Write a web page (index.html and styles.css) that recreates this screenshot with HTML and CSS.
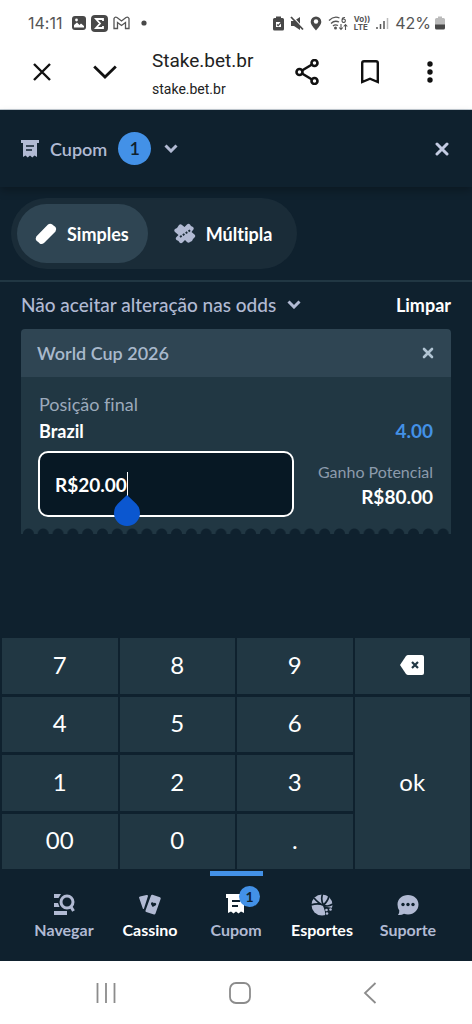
FILE: index.html
```html
<!DOCTYPE html>
<html lang="pt-BR">
<head>
<meta charset="utf-8">
<meta name="viewport" content="width=device-width, initial-scale=1">
<title>Stake.bet.br</title>
<link rel="stylesheet" href="styles.css">
</head>
<body>
<div class="status">
  <div class="status-group">
    <span class="clock">14:11</span>
    <svg width="14" height="14" viewBox="0 0 14 14"><rect width="14" height="14" rx="3" fill="#484848"/><path d="M2 11.500V9l3-2.500L7.500 9l1.500-1.500 3 2.500v1.500z" fill="#fff"/><circle cx="4.500" cy="4" r="1.400" fill="#fff"/></svg>
    <svg width="17" height="17" viewBox="0 0 17 17"><rect width="17" height="17" rx="4" fill="#484848"/><path d="M12 6V4H5l4 4.500L5 13h7v-2" fill="none" stroke="#fff" stroke-width="1.800"/></svg>
    <svg width="17" height="14" viewBox="0 0 17 14"><path d="M1 12.500V2.500Q2 .5 4 1.500L8.500 5 13 1.500Q15 .5 16 2.500V12.500H12.500V6.500L8.500 9.500 4.500 6.500V12.500Z" fill="none" stroke="#555" stroke-width="1.300"/></svg>
    <svg class="dot" width="6" height="6" viewBox="0 0 6 6"><circle cx="3" cy="3" r="2.600" fill="#484848"/></svg>
  </div>
  <div class="status-group status-right">
    <svg width="11" height="15" viewBox="0 0 11 15"><path d="M3 2V.5h5V2h1.500Q11 2 11 3.500v9.500q0 1.500-1.500 1.500h-8Q0 14.500 0 13V3.500Q0 2 1.500 2z" fill="#484848"/><path d="M3 6h5v5H3z" fill="#fff"/><path d="M4 8.500l1.200 1.200L8.500 6" fill="none" stroke="#484848" stroke-width="1.200"/></svg>
    <svg width="14" height="15" viewBox="0 0 14 15"><path d="M1 5h3l6-4v13L4 10H1z" fill="#484848"/><path d="M2 0l12 13" stroke="#fff" stroke-width="1.200"/><path d="M1 1l12 12.500" stroke="#484848" stroke-width="1.800"/></svg>
    <svg width="12" height="15" viewBox="0 0 12 15"><path d="M6 .5a5.300 5.300 0 0 1 5.300 5.300C11.300 9 8 12 6 14.500 4 12 .7 9 .7 5.800A5.300 5.300 0 0 1 6 .5z" fill="#484848"/><circle cx="6" cy="5.500" r="2.200" fill="#fff"/></svg>
    <svg width="20" height="15" viewBox="0 0 20 15"><g fill="none" stroke="#555" stroke-width="1.300"><path d="M1 4.500Q6-.5 11.500 2M3 7.500q3.500-3.500 8-1.500M5 10q2-2 5-.5"/><path d="M17 1.500q-3-.5-3 3a1.700 1.700 0 1 0 .2-.6" stroke-width="1.100"/><path d="M13 8v5.500M11.200 11.500l1.800 2 1.800-2M17.500 14V8.500M15.700 10.500l1.800-2 1.800 2" stroke-width="1.100"/></g><circle cx="7.500" cy="12" r="1.500" fill="#555"/></svg>
    <span class="volte"><span>Vo))</span><span>LTE</span></span>
    <svg width="13" height="13" viewBox="0 0 13 13"><path d="M1 10v2M4.500 7v5M8 4v8" stroke="#555" stroke-width="1.500"/><path d="M11.500 1v11" stroke="#bbb" stroke-width="1.500"/></svg>
    <span class="battery">42%</span>
    <svg width="10" height="14" viewBox="0 0 10 14"><path d="M3 2V.5h4V2h1.500Q10 2 10 3.500V9H0V3.500Q0 2 1.500 2z" fill="#bbb"/><path d="M0 8.500h10V12q0 1.500-1.500 1.500h-7Q0 13.500 0 12z" fill="#484848"/></svg>
  </div>
</div>

<header class="browser">
  <button class="plain" aria-label="Fechar aba"><svg width="18" height="18" viewBox="0 0 18 18"><path d="M1 1l16 16M17 1L1 17" stroke="#111" stroke-width="2.400"/></svg></button>
  <button class="plain" aria-label="Minimizar"><svg width="24" height="14" viewBox="0 0 24 14"><path d="M1.200 1.500L12 12 22.800 1.500" fill="none" stroke="#111" stroke-width="2.800"/></svg></button>
  <div class="site"><span class="site-title">Stake.bet.br</span><span class="site-url">stake.bet.br</span></div>
  <div class="browser-actions">
    <button class="plain" aria-label="Compartilhar"><svg width="24" height="26" viewBox="0 0 24 26"><g fill="none" stroke="#111" stroke-width="2.600"><path d="M7 11.500l10-6M7 14.500l10 6"/><circle cx="4.500" cy="13" r="3"/><circle cx="19.500" cy="4" r="3"/><circle cx="19.500" cy="22" r="3"/></g></svg></button>
    <button class="plain" aria-label="Favoritar"><svg width="18" height="24" viewBox="0 0 18 24"><path d="M1.200 3Q1.200 1.200 3 1.200h12Q16.800 1.200 16.800 3v19L9 18.700 1.200 22z" fill="none" stroke="#111" stroke-width="2.400"/></svg></button>
    <button class="plain" aria-label="Mais opções"><svg width="6" height="22" viewBox="0 0 6 22"><g fill="#111"><circle cx="3" cy="3" r="2.700"/><circle cx="3" cy="11" r="2.700"/><circle cx="3" cy="19" r="2.700"/></g></svg></button>
  </div>
</header>

<main class="slip">
  <div class="slip-head">
    <button class="plain slip-toggle">
      <svg width="18" height="18" viewBox="0 0 18 18"><path d="M0 0h18v3h-2v14l-2.500-1.500-2.200 2-2.300-2-2.300 2-2.200-2L2 17V3H0z" fill="#b1bad3"/><path d="M5 6h8M5 10h6" stroke="#0f212e" stroke-width="1.700"/></svg>
      <span>Cupom</span><span class="count">1</span>
      <svg width="14" height="9" viewBox="0 0 14 9"><path d="M1.500 1.500L7 7l5.500-5.500" fill="none" stroke="#b1bad3" stroke-width="3"/></svg>
    </button>
    <button class="plain" aria-label="Fechar cupom"><svg width="14" height="14" viewBox="0 0 14 14"><path d="M2 2l10 10M12 2L2 12" stroke="#c3cbe2" stroke-width="3" stroke-linecap="round"/></svg></button>
  </div>

  <div class="modes">
    <div class="pill" role="tablist">
      <button class="tab active" role="tab" aria-selected="true"><svg width="22" height="22" viewBox="0 0 22 22"><path d="M13 1.500Q15 0 17 1.300L18.500 2.500 20.500 4Q22 6 20.500 8.500L9 20Q7 21.500 5 20.700L3.500 19.200 1.500 17.700Q0 16 1.300 13.500Z" fill="#fff"/></svg>Simples</button>
      <button class="tab" role="tab" aria-selected="false"><svg width="22" height="22" viewBox="0 0 22 22"><path d="M5 2q1.500-1.500 3 0l2.500 2L13 1.500q1.500-1.500 3 0l1 1.500 2 1q1.500 1.500 0 3L17.500 9l3 2.500q1.500 1.500 0 3L19 16l-1 2-2 1q-1.500 1.500-3 0l-2-2-2.500 2.500q-1.500 1.500-3 0L4.500 18l-2-1q-1.500-1.500 0-3l2-2L1 9q-1.500-1.500 0-3l2-1z" fill="#b1bad3"/><path d="M6 14L16.500 7" stroke="#1a2c38" stroke-width="1.900" stroke-dasharray="2 1.400"/></svg>Múltipla</button>
    </div>
  </div>

  <div class="options">
    <button class="plain odds">Não aceitar alteração nas odds<svg width="14" height="9" viewBox="0 0 14 9"><path d="M1.500 1.500L7 7l5.500-5.500" fill="none" stroke="#b1bad3" stroke-width="3"/></svg></button>
    <button class="plain clear">Limpar</button>
  </div>

  <section class="ticket">
    <div class="ticket-head"><span>World Cup 2026</span><button class="plain" aria-label="Remover"><svg width="12" height="12" viewBox="0 0 12 12"><path d="M2 2l8 8M10 2L2 10" stroke="#b1c4d3" stroke-width="2.600" stroke-linecap="round"/></svg></button></div>
    <div class="ticket-body">
      <label class="market" for="stake">Posição final</label>
      <div class="pick"><span>Brazil</span><span class="price">4.00</span></div>
      <div class="wager">
        <div class="field"><input id="stake" type="text" inputmode="decimal" value="R$20.00"><span class="caret"></span><svg class="handle" width="26" height="31" viewBox="0 0 26 31"><path d="M13 0L22.200 8.800A13 13 0 1 1 3.800 8.800Z" fill="#0b57d0"/></svg></div>
        <div class="payout"><span class="payout-label">Ganho Potencial</span><span class="payout-value">R$80.00</span></div>
      </div>
    </div>
    <div class="tear"></div>
  </section>
</main>

<div class="keypad">
  <button>7</button><button>8</button><button>9</button>
  <button aria-label="Apagar"><svg width="24" height="20" viewBox="0 0 24 20"><path d="M8 0h14q2 0 2 2v16q0 2-2 2H8q-1 0-2-1L0 10 6 1Q7 0 8 0z" fill="#fff"/><path d="M12 7l6 6M18 7l-6 6" stroke="#213743" stroke-width="2.200"/></svg></button>
  <button>4</button><button>5</button><button>6</button><button class="ok">ok</button>
  <button>1</button><button>2</button><button>3</button>
  <button>00</button><button>0</button><button>.</button>
</div>

<nav class="tabs">
  <a href="#navegar"><svg width="22" height="22" viewBox="0 0 22 22"><path d="M1 0h7L5.500 4H1zM1 9h4l1.500 4H1zM1 17h13v4H1z" fill="#b1bad3"/><circle cx="14" cy="8" r="6" fill="none" stroke="#b1bad3" stroke-width="3"/><path d="M17.500 12l3 5" stroke="#b1bad3" stroke-width="3"/></svg><span>Navegar</span></a>
  <a href="#cassino" class="bright"><svg width="22" height="22" viewBox="0 0 22 22"><path d="M0 3.500Q0 3 1 2.500l6.500-1.400q1.500-.3 1.500.9L5 14.500q-.7 1-1.200 0zM12 1.500q.5-1 1.500-.7l7.500 2.400q1 .5.700 1.600L16.500 19.500q-.5 1.200-1.500.9L7.200 18q-1-.5-.7-1.500z" fill="#b1bad3"/><path d="M13.700 13l-1.700-2.800q-.5-2 1.300-2 1 .1 1.500 1 .7-.6 1.700-.2 1.500 1 .3 2.300z" fill="#0f212e"/></svg><span>Cassino</span></a>
  <a href="#cupom" class="current"><span class="badged"><svg width="22" height="20" viewBox="0 0 22 20"><path d="M1 0h20v4h-2v15l-3-1.500-2.500 2-2.500-2-2.500 2L6 17.500 3 19V4H1z" fill="#fff"/><path d="M7 7h8M7 12h6" stroke="#0f212e" stroke-width="2"/></svg><span class="badge">1</span></span><span>Cupom</span></a>
  <a href="#esportes" class="bright"><svg width="22" height="22" viewBox="0 0 22 22"><circle cx="11" cy="11" r="10.500" fill="#b1bad3"/><path d="M11.500 0Q9.500 6 12.500 11T15 22M3 4q5 6 10 7.500T22 10M0 11q7-2.500 12.500.2M12.500 11Q17 7 18 2" fill="none" stroke="#0f212e" stroke-width="1.700"/><path d="M13 12.500l9 1.500v8h-7z" fill="#0f212e"/><g fill="#b1bad3"><circle cx="15.500" cy="16" r="1.300"/><circle cx="19.500" cy="15.500" r="1.300"/><circle cx="16" cy="19.500" r="1.300"/></g></svg><span>Esportes</span></a>
  <a href="#suporte"><svg width="22" height="22" viewBox="0 0 22 22"><path d="M11 1c6 0 10.500 4 10.500 9.500S17 20.500 11 20.500q-2 0-4-.7Q4.500 21.500 1 21q1.500-2 1.300-4.500Q.5 14 .5 10.500C.5 5 5 1 11 1z" fill="#b1bad3"/><g fill="#0f212e"><circle cx="6" cy="10.500" r="1.700"/><circle cx="11" cy="10.500" r="1.700"/><circle cx="16" cy="10.500" r="1.700"/></g></svg><span>Suporte</span></a>
</nav>

<div class="system">
  <button class="plain" aria-label="Recentes"><svg width="20" height="20" viewBox="0 0 20 20"><path d="M1.500 0v20M10 0v20M18.500 0v20" stroke="#8c8c8c" stroke-width="1.800"/></svg></button>
  <button class="plain" aria-label="Início"><svg width="22" height="22" viewBox="0 0 22 22"><rect x="1" y="1" width="20" height="20" rx="6" fill="none" stroke="#8c8c8c" stroke-width="1.800"/></svg></button>
  <button class="plain" aria-label="Voltar"><svg width="14" height="22" viewBox="0 0 14 22"><path d="M12.500 1L2 11l10.500 10" fill="none" stroke="#8c8c8c" stroke-width="1.800"/></svg></button>
</div>
</body>
</html>
```

FILE: styles.css
```css
* { box-sizing: border-box; }
body {
  margin: 0;
  min-height: 100vh;
  display: flex;
  flex-direction: column;
  background: #0f212e;
  color: #fff;
  font-family: Lato, "Noto Sans", sans-serif;
  font-size: 18px;
  line-height: 24px;
  font-variant-ligatures: none;
}
svg { display: block; flex: none; }
button { font: inherit; font-variant-ligatures: inherit; color: inherit; cursor: pointer; }
.plain { border: 0; background: none; padding: 0; display: flex; align-items: center; }

.status {
  display: flex;
  justify-content: space-between;
  align-items: center;
  height: 46px;
  padding: 0 27px 0 28px;
  background: #fff;
  color: #555;
  font-family: Inter, Roboto, sans-serif;
  font-size: 16px;
}
.status-group { display: flex; align-items: center; gap: 5px; }
.clock { padding-right: 5px; }
.dot { margin-left: 6px; }
.status-right { gap: 6px; }
.volte { display: flex; flex-direction: column; font-size: 8px; line-height: 8px; font-weight: 700; }
.battery { margin-right: -2px; }

.browser {
  display: flex;
  align-items: center;
  height: 64px;
  padding: 0 39px 12px 33px;
  background: #fff;
  border-bottom: 1px solid #c3ccd3;
  color: #222;
  font-family: Roboto, sans-serif;
}
.browser > .plain + .plain { margin-left: 42px; }
.site { display: flex; flex-direction: column; margin-left: 35px; padding-top: 4px; }
.site-title { font-size: 19px; line-height: 30px; }
.site-url { font-size: 14px; line-height: 26px; }
.browser-actions { display: flex; align-items: center; gap: 42px; margin-left: auto; }
.browser-actions .plain:last-child { margin-left: 6px; }

.slip { flex: 1; padding-bottom: 24px; }
.slip-head {
  position: relative;
  display: flex;
  justify-content: space-between;
  align-items: center;
  height: 77px;
  padding: 0 23px 0 21px;
  box-shadow: 0 4px 8px rgba(0, 0, 0, .25);
}
.slip-toggle { gap: 11px; color: #b1bad3; font-weight: 600; }
.count {
  width: 33px;
  border-radius: 50%;
  background: #4391e7;
  color: #0f212e;
  line-height: 33px;
  text-align: center;
}
.slip-toggle svg:last-child { margin-left: 2px; }

.modes { padding: 11px; border-bottom: 2px solid #213743; }
.pill { display: inline-flex; vertical-align: top; padding: 6px; border-radius: 36px; background: #1a2c38; }
.tab {
  display: flex;
  align-items: center;
  gap: 10px;
  height: 59px;
  padding: 0 19px 0 18px;
  border: 0;
  border-radius: 30px;
  background: none;
  font-weight: 700;
}
.tab + .tab { padding-left: 26px; }
.tab.active { background: #2f4553; }

.options { display: flex; justify-content: space-between; align-items: center; height: 47px; padding: 0 21px 2px; }
.odds { gap: 11px; color: #b1bad3; font-size: 19px; font-weight: 500; }
.clear { font-weight: 700; }

.ticket { margin: 0 21px; }
.ticket-head {
  display: flex;
  justify-content: space-between;
  align-items: center;
  height: 48px;
  padding: 0 17px 0 16px;
  border-radius: 4px 4px 0 0;
  background: #2f4553;
  color: #a9b9cc;
  font-weight: 600;
}
.ticket-body { padding: 14px 18px 11px 17px; background: #213743; }
.market { display: block; padding-left: 1px; line-height: 26px; color: #9caabb; }
.pick { display: flex; justify-content: space-between; padding-left: 1px; line-height: 28px; font-weight: 700; }
.price { color: #4391e7; font-size: 19px; }
.wager { display: flex; gap: 24px; align-items: center; margin-top: 6px; }
.field { position: relative; flex: 1; min-width: 0; }
.field input {
  display: block;
  width: 100%;
  height: 66px;
  padding: 0 15px;
  border: 2px solid #fff;
  border-radius: 10px;
  background: #071824;
  color: #fff;
  font: inherit;
  font-size: 19px;
  font-weight: 700;
  outline: 0;
}
.caret { position: absolute; left: 89px; top: 21px; width: 1px; height: 24px; background: #fff; }
.handle { position: absolute; left: 76px; top: 44px; }
.payout { display: flex; flex-direction: column; text-align: right; font-weight: 700; }
.payout-label { font-size: 16px; line-height: 26px; font-weight: 400; color: #8c9bac; }
.payout-value { font-size: 19px; }
.tear {
  height: 6px;
  background: radial-gradient(circle at 50% 100%, transparent 5px, #213743 6px) 0 0 / 15px 6px round;
}

.keypad {
  display: grid;
  grid-template-columns: repeat(4, 1fr);
  grid-template-rows: repeat(4, 1fr);
  gap: 3px 2px;
  height: 231px;
  padding: 0 2px;
}
.keypad button {
  display: flex;
  align-items: center;
  justify-content: center;
  padding: 0 0 2px;
  border: 0;
  background: #213743;
  font-size: 24px;
}
.keypad .ok { grid-row: span 3; }

.tabs { display: flex; height: 92px; padding: 0 21px; }
.tabs a {
  flex: 1;
  display: flex;
  flex-direction: column;
  align-items: center;
  gap: 2px;
  padding-top: 25px;
  color: #b1bad3;
  font-size: 16px;
  font-weight: 700;
  text-decoration: none;
}
.tabs .bright { color: #fff; }
.tabs .current { background: linear-gradient(#4391e7, #4391e7) center 2px / 53px 5px no-repeat; }
.badged { position: relative; padding-bottom: 2px; }
.badge {
  position: absolute;
  left: 14px;
  top: -8px;
  width: 21px;
  border-radius: 50%;
  background: #4391e7;
  color: #0f212e;
  font-size: 14px;
  line-height: 21px;
  text-align: center;
}

.system { display: flex; justify-content: space-between; align-items: center; height: 63px; padding: 0 95px 0 96px; background: #fff; }
```
